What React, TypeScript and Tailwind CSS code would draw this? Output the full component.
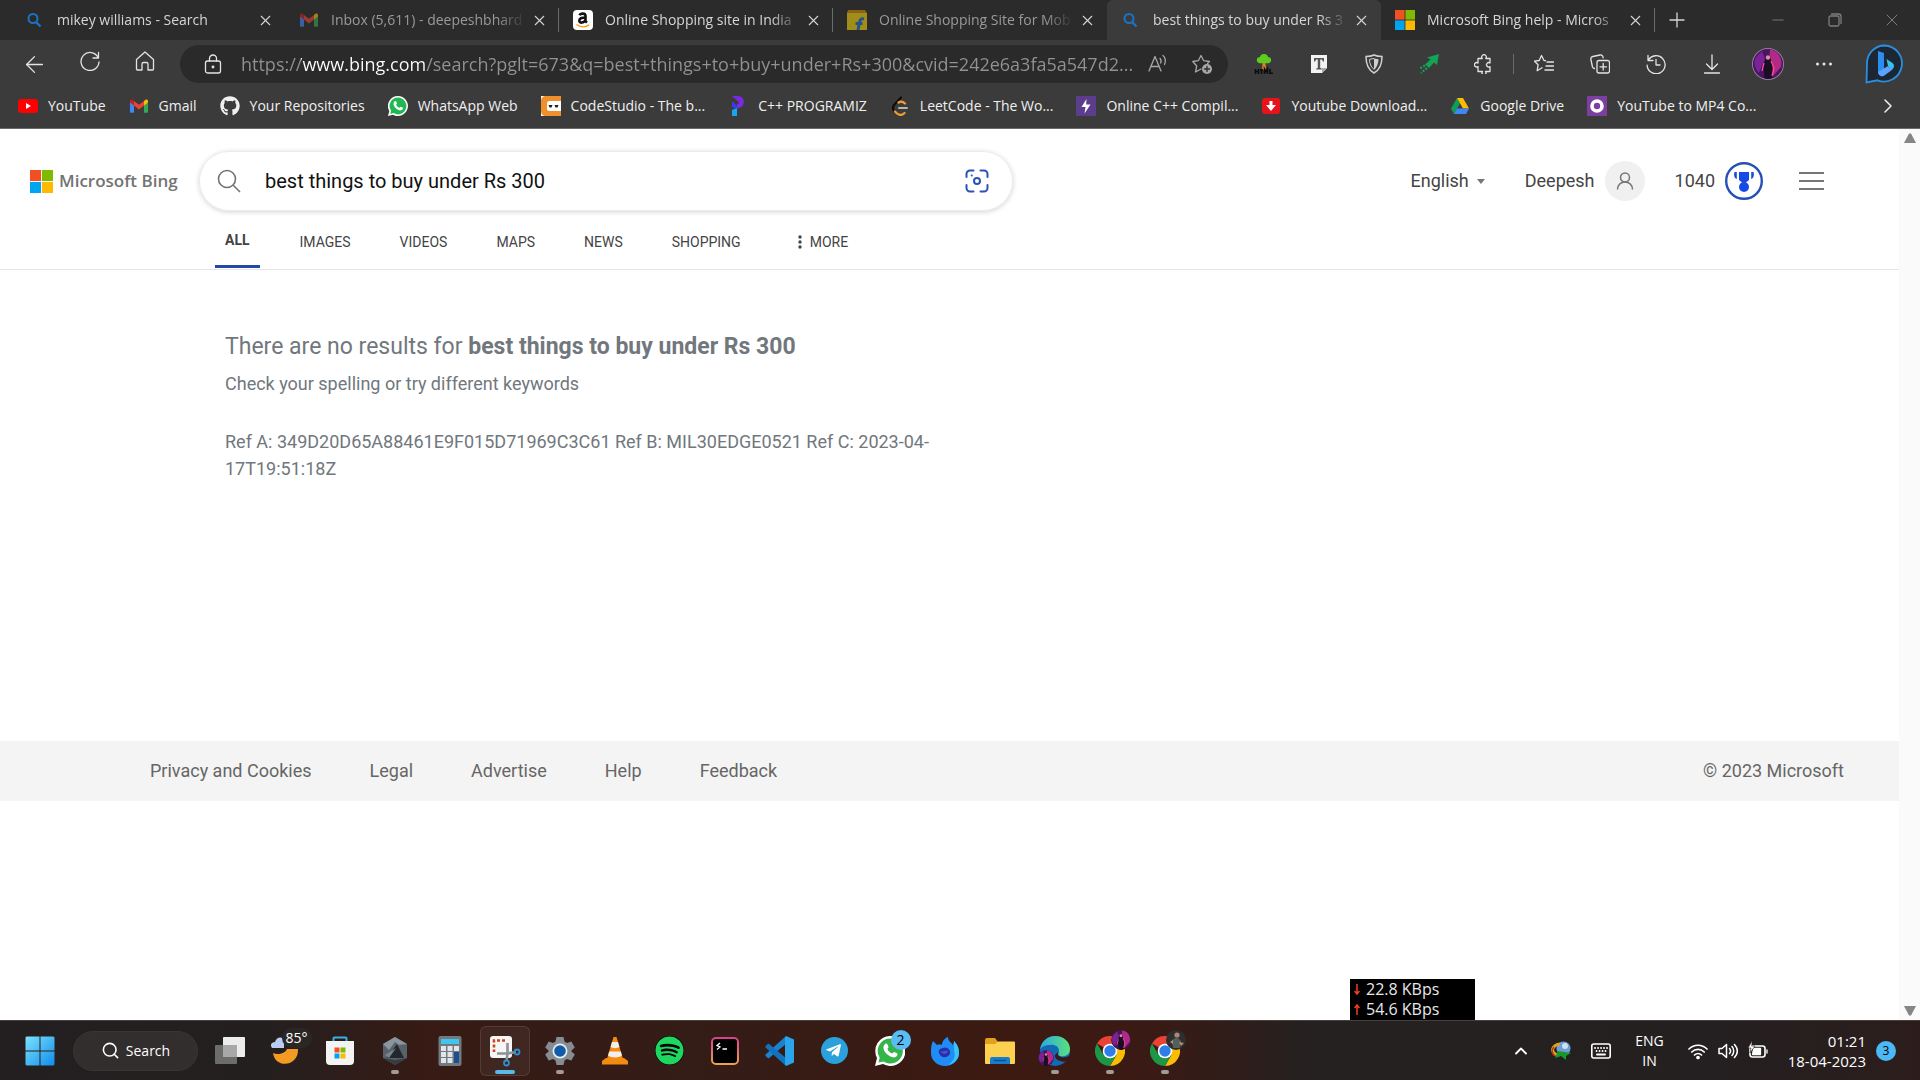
import React from 'react';
import type { ReactNode } from 'react';
import {
  ArrowLeft,
  ChevronRight,
  ChevronUp,
  Minus,
  Plus,
  Search,
  X,
} from 'lucide-react';
import { FaGithub, FaSpotify, FaTelegramPlane } from 'react-icons/fa';

type SvgProps = { className?: string; children: ReactNode; box?: string };

// Thin outline icon used in the browser toolbar
function Line({ className = 'size-5', children, box = '0 0 20 20' }: SvgProps) {
  return (
    <svg
      viewBox={box}
      className={className}
      fill="none"
      stroke="currentColor"
      strokeWidth="1.3"
      strokeLinecap="round"
      strokeLinejoin="round"
      aria-hidden="true"
    >
      {children}
    </svg>
  );
}

function Art({ className = 'size-5', children, box = '0 0 20 20' }: SvgProps) {
  return (
    <svg viewBox={box} className={className} aria-hidden="true">
      {children}
    </svg>
  );
}

function MicrosoftIcon({ className }: { className?: string }) {
  return (
    <Art className={className}>
      <path fill="#f25022" d="M0 0h9.6v9.6H0z" />
      <path fill="#7fba00" d="M10.4 0H20v9.6h-9.6z" />
      <path fill="#00a4ef" d="M0 10.4h9.6V20H0z" />
      <path fill="#ffb900" d="M10.4 10.4H20V20h-9.6z" />
    </Art>
  );
}

function GmailIcon({ className }: { className?: string }) {
  return (
    <Art className={className}>
      <path fill="#4285f4" d="M1 5v10.5c0 .8.5 1.3 1.3 1.3H5V8z" />
      <path fill="#34a853" d="M15 8v8.8h2.7c.8 0 1.3-.5 1.3-1.3V5z" />
      <path fill="#c5221f" d="M1 5.2V6.5L5 9.6V5L3.8 4C2.6 3 1 3.8 1 5.2z" />
      <path fill="#fbbc04" d="M19 5.2V6.5L15 9.6V5l1.2-1C17.4 3 19 3.8 19 5.2z" />
      <path fill="#ea4335" d="M5 4.9l5 3.8 5-3.8v4.7l-5 3.8-5-3.8z" />
    </Art>
  );
}

function BingSearchIcon() {
  return (
    <Art>
      <g fill="none" stroke="#1a73c4" strokeWidth="2">
        <circle cx="8" cy="8.5" r="4.5" />
        <path d="M11 12l4.5 4.5" strokeWidth="2.4" />
      </g>
    </Art>
  );
}

function FlipkartIcon() {
  return (
    <Art className="size-5 opacity-60">
      <path fill="#f0d010" d="M0 3h20v17H0z" />
      <path fill="#c98a00" d="M1 0h17l2 3H0z" />
      <path
        fill="none"
        stroke="#1e6fc8"
        strokeWidth="3"
        d="M17 9c-3-.7-4 .5-4.5 3.5L11 20M8.5 13.5h7"
      />
    </Art>
  );
}

function WhatsappDisc() {
  return (
    <Art>
      <path fill="#fff" d="M10 0a10 10 0 1 1-5 18.7L0 20l1.3-5A10 10 0 0 1 10 0z" />
      <path fill="#20b853" d="M10 1.6a8.4 8.4 0 1 1-4.5 15.5l-3.2.8.8-3.1A8.4 8.4 0 0 1 10 1.6z" />
      <path fill="#fff" d="M6.7 5.3c.7-.5 1.3-.3 1.6.4l.7 1.6c0 .7-.9 1-.7 1.6.7 1.3 1.700 2.300 3 2.800.5.100.9-1 1.500-1l1.800.9c.5.300.4 1 0 1.600-1 1.600-3 1.400-5 .2-2-1.100-3.600-3-4-5-.2-1.300.3-2.500 1.100-3.100z" />
    </Art>
  );
}

const tabs = [
  { title: 'mikey williams - Search', icon: <BingSearchIcon /> },
  { title: 'Inbox (5,611) - deepeshbhard', icon: <GmailIcon className="size-5 opacity-60" />, dim: true, divider: true },
  {
    title: 'Online Shopping site in India',
    divider: true,
    icon: (
      <span className="flex size-5 items-center justify-center rounded-sm bg-white">
        <Art>
          <path
            fill="none"
            stroke="#111"
            strokeWidth="2.6"
            d="M6.5 5.3c.8-2.3 6-2.4 6 .7v5.2l1.4 1.4M12.5 7.5C8.5 7.5 6.300 8.500 6.300 10.700c0 2.700 4.700 2.600 6.200-.9"
          />
          <path fill="none" stroke="#f90" strokeWidth="1.5" d="M3.5 14.5c4 3 9 3 12.5.3" />
        </Art>
      </span>
    ),
  },
  { title: 'Online Shopping Site for Mob', icon: <FlipkartIcon />, dim: true },
  { title: 'best things to buy under Rs 3', icon: <BingSearchIcon />, active: true },
  { title: 'Microsoft Bing help - Micros', icon: <MicrosoftIcon className="size-5" />, divider: true },
];

function TabStrip() {
  return (
    <div className="flex h-10 items-stretch bg-[#2b2b2b] pl-[11px] text-[#d6d6d6]">
      {tabs.map((tab) => (
        <div
          key={tab.title}
          className={
            'flex w-[274px] min-w-0 items-center pl-3.5 pr-2.5 ' +
            (tab.active ? 'rounded-t-md bg-[#3b3b3b]' : '')
          }
        >
          <button className="flex min-w-0 flex-1 items-center gap-3 text-left">
            <span className="shrink-0">{tab.icon}</span>
            <span
              className={
                'min-w-0 flex-1 overflow-hidden whitespace-nowrap text-sm leading-5 [mask-image:linear-gradient(90deg,#000_85%,transparent)] ' +
                (tab.dim ? 'text-[#9a9a9a]' : '')
              }
            >
              {tab.title}
            </span>
          </button>
          <button aria-label={'Close ' + tab.title} className="ml-1 flex w-[18px] justify-center">
            <X size={17} strokeWidth={1.5} />
          </button>
          <span className={'-mr-2.5 ml-2.5 h-6 w-px ' + (tab.divider ? 'bg-[#6a6a6a]' : '')} />
        </div>
      ))}
      <button aria-label="New tab" className="flex w-11 items-center justify-center">
        <Plus size={24} strokeWidth={1.3} />
      </button>
      <div className="ml-auto flex text-[#7d7d7d]">
        <button aria-label="Minimize" className="flex w-[57px] items-center justify-center">
          <Minus size={18} strokeWidth={1.2} />
        </button>
        <button aria-label="Restore" className="flex w-[57px] items-center justify-center">
          <Line className="size-4" box="0 0 16 16">
            <rect x="2" y="4" width="10" height="10" rx="1.5" />
            <path d="M4.5 2h7A2.5 2.5 0 0 1 14 4.5v7" />
          </Line>
        </button>
        <button aria-label="Close window" className="flex w-[57px] items-center justify-center">
          <X size={20} strokeWidth={1.2} />
        </button>
      </div>
    </div>
  );
}

function Avatar({ className = '' }: { className?: string }) {
  return (
    <Art className={'rounded-full ' + className} box="0 0 30 30">
      <circle cx="15" cy="15" r="15" fill="#4a1560" />
      <path fill="#b02a86" d="M17 0c8 2 13 9 11 18l-8 9-4-14z" />
      <path fill="#7a2397" d="M3 8l6-6 3 8-6 14C2 20 0 14 3 8z" />
      <path fill="#1a0d24" d="M12.500 9c1-4 5-4 5 0l2 8v13h-8l-1-13z" />
      <circle cx="15" cy="8.5" r="2.2" fill="#d98bb8" />
      <path stroke="#ff4f8c" strokeWidth="1.2" fill="none" d="M18 12l3 7-2 8M11 14l-2 8" />
    </Art>
  );
}

const extensions = [
  {
    label: 'HTML Tree',
    icon: (
      <Art>
        <path fill="#d8862a" d="M8.5 9h3l.5 7H8z" />
        <path fill="#5ecb1e" d="M10 0c3 0 4 2 4 3 3 0 4 3 2.5 5-1.5 2-4 1-6.5 1S5 10 3.5 8C2 6 3 3 6 3c0-1 1-3 4-3z" />
        <path stroke="#0d0d0d" strokeWidth="1.6" fill="none" d="M1.5 15v5M4.5 15v5M1.5 17.5h3M6 15.8h3M7.5 15v5M10.5 20v-5l1.5 2.5 1.5-2.5v5M16 15v4.2h3" />
      </Art>
    ),
  },
  {
    label: 'Text',
    icon: (
      <Art>
        <path fill="#f2f2f2" d="M2 1h16v13l-5 5H2z" />
        <path fill="#555" d="M5 4h10v3.5h-1.2L13 5.5h-1.8V14l1.5.6v.9H7.3v-.9l1.5-.6V5.5H7l-.8 2H5z" />
        <path fill="#aaa" d="M13 14h5l-5 5z" />
      </Art>
    ),
  },
  {
    label: 'Shield',
    icon: (
      <Art>
        <path fill="none" stroke="#d0d0d0" strokeWidth="1.5" d="M10 1c3 1.5 5.5 1.5 8 1.5C18 11 15.5 16 10 19 4.5 16 2 11 2 2.5 4.5 2.5 7 2.5 10 1z" />
        <path fill="#d0d0d0" d="M10 4.5l4.5.8c0 4-1.5 8-4.5 10.7z" />
        <path fill="none" stroke="#d0d0d0" d="M10 4.5l-4.5.8c0 4 1.5 8 4.5 10" />
      </Art>
    ),
  },
  {
    label: 'Send',
    icon: (
      <Art>
        <path fill="#14a457" d="M20 0l-2 11-3-2.5-5 5.5-4-3.5L11.5 5.500 8 3.500z" />
        <path stroke="#14a457" strokeWidth="2.2" strokeDasharray="2 1.5" fill="none" d="M6 11.5L0 15M8 14l-6 5" />
      </Art>
    ),
  },
  {
    label: 'Extensions',
    icon: (
      <Line>
        <path d="M4 4.5h4.2a2.3 2.3 0 1 1 3.6 0H16V9a2.2 2.2 0 1 0 0 3.6v4.9h-4.5a2 2 0 1 1-3 0H4v-5a2.2 2.2 0 1 1 0-3.5z" />
      </Line>
    ),
  },
];

const browserActions = [
  {
    label: 'Favorites',
    icon: (
      <Line>
        <path d="M11.5 6.7L10 6.5 7.5 1.5 5.2 6.5.5 7.2l3.6 3.5-.9 6 4.8-3M13 8h6.5M12 12h7.5M11 16h8.5" />
      </Line>
    ),
  },
  {
    label: 'Collections',
    icon: (
      <Line>
        <rect x="7" y="6.5" width="12.5" height="12.5" rx="2" />
        <path d="M13.2 9.5v6.5M10 12.8h6.5M4.5 14.5A3 3 0 0 1 2.5 13L.8 5A2.5 2.5 0 0 1 2.8 2.5L10 1a2.5 2.5 0 0 1 3 2l.1.8" />
      </Line>
    ),
  },
  {
    label: 'History',
    icon: (
      <Line>
        <path d="M2 1.5v5h5M2.3 6.2a9 9 0 1 1-1.2 5M10 5.5v5.5h4" />
      </Line>
    ),
  },
  {
    label: 'Downloads',
    icon: (
      <Line>
        <path d="M10 1v14M4.5 10l5.5 5.5L15.5 10M2.5 19h15" />
      </Line>
    ),
  },
  { label: 'Profile', icon: <Avatar className="size-[30px] ring-1 ring-[#9a7aa8]" /> },
  {
    label: 'Settings and more',
    icon: (
      <Art>
        <g fill="#e6e6e6">
          <circle cx="3.5" cy="10" r="1.5" />
          <circle cx="10" cy="10" r="1.5" />
          <circle cx="16.5" cy="10" r="1.5" />
        </g>
      </Art>
    ),
  },
];

function Toolbar() {
  return (
    <div className="flex h-12 items-center pl-[7px] pr-4 text-[#e4e4e4]">
      <div className="flex">
        <button aria-label="Back" className="flex w-[55px] justify-center">
          <ArrowLeft size={27} strokeWidth={1.2} />
        </button>
        <button aria-label="Refresh" className="flex w-[55px] justify-center">
          <Line>
            <path d="M18.5 1.5v5.5H13M18 6.3A9 9 0 1 0 19 11" />
          </Line>
        </button>
        <button aria-label="Home" className="flex w-[55px] justify-center">
          <Line>
            <path d="M1.5 8.5L10 1l8.5 7.5V18a1 1 0 0 1-1 1H13v-6a1.5 1.5 0 0 0-1.5-1.5h-3A1.5 1.5 0 0 0 7 13v6H2.5a1 1 0 0 1-1-1z" />
          </Line>
        </button>
      </div>
      <div className="ml-2 flex h-[38px] flex-1 items-center rounded-full bg-[#2a2a2a] pl-[23px] pr-4">
        <button aria-label="Site information">
          <Line>
            <rect x="2.5" y="7" width="15" height="12" rx="2" />
            <path d="M6.5 7V4.5a3.500 3.500 0 0 1 7 0V7" />
            <circle cx="10" cy="13" r=".8" fill="currentColor" />
          </Line>
        </button>
        <input
          aria-label="Address"
          type="text"
          readOnly
          value="https://www.bing.com/search?pglt=673&q=best+things+to+buy+under+Rs+300&cvid=242e6a3fa5a547d2..."
          className="ml-[18px] mr-2.5 min-w-0 flex-1 bg-[linear-gradient(90deg,#929292_60px,#ffffff_60px,#ffffff_185px,#929292_185px)] bg-clip-text text-lg leading-6 text-transparent outline-none"
        />
        <div className="flex gap-6 text-[#a8a8a8]">
          <button aria-label="Read aloud">
            <Line>
              <path d="M1 17L7 2.5 13 17M3 12.5h8M12 4.5c1 1 1.300 3 .7 4.500M15 1.500c2.500 2 3 6 1.500 9" />
            </Line>
          </button>
          <button aria-label="Add to favorites">
            <Line>
              <path d="M9 15l-5.500 3 1.200-6L.8 7.500l5.500-.8L9 1.500l2.700 5.200 5.800.8-2 2" />
              <circle cx="15" cy="15" r="5" fill="#a8a8a8" stroke="none" />
              <path stroke="#2a2a2a" d="M15 12.500v5M12.500 15h5" />
            </Line>
          </button>
        </div>
      </div>
      <div className="ml-2 flex items-center">
        {extensions.map((ext) => (
          <button key={ext.label} aria-label={ext.label} className="flex w-[55px] justify-center">
            {ext.icon}
          </button>
        ))}
        <span className="mx-0.5 h-5 w-px bg-[#6a6a6a]" />
        {browserActions.map((action) => (
          <button key={action.label} aria-label={action.label} className="flex w-14 justify-center">
            {action.icon}
          </button>
        ))}
        <button aria-label="Bing chat" className="ml-3">
          <Art className="size-10" box="0 0 40 40">
            <path fill="#1d2733" stroke="#2a8fe0" strokeWidth="1.8" d="M20.500 1.500a18 18 0 1 1-7 34.800L2.500 38.500 3 20A17.500 18 0 0 1 20.500 1.500z" />
            <path fill="#2d8cf0" d="M14 7l6 2v16l-6 4z" />
            <path fill="#35c1f1" d="M22.500 15l6 4c2 1.500 2 5-.5 6.500l-4-3.500z" />
            <path fill="#5aa4ff" d="M14 28l10-6 4.500 3.500-8.500 6.300c-3 1.500-6-.5-6-3.800z" />
          </Art>
        </button>
      </div>
    </div>
  );
}

const bookmarks = [
  {
    label: 'YouTube',
    icon: (
      <Art>
        <rect y="3" width="20" height="14" rx="3.5" fill="#f00" />
        <path fill="#fff" d="M8 7l5 3-5 3z" />
      </Art>
    ),
  },
  { label: 'Gmail', icon: <GmailIcon className="size-5" /> },
  { label: 'Your Repositories', icon: <FaGithub size={20} /> },
  { label: 'WhatsApp Web', icon: <WhatsappDisc /> },
  {
    label: 'CodeStudio - The b...',
    icon: (
      <Art>
        <path fill="#fff" d="M0 0h20v20H0z" />
        <path fill="#f0902a" d="M5 0h15v5H8.500A2.500 2.500 0 0 0 6 7.500v5A2.500 2.500 0 0 0 8.500 15H20v5H5c-3 0-5-2-5-5V5c0-3 2-5 5-5z" />
        <path fill="#222" d="M7.500 9h4l-1 2.500h-2zM13.500 9h4l-1 2.500h-2z" />
      </Art>
    ),
  },
  {
    label: 'C++ PROGRAMIZ',
    icon: (
      <Art>
        <path fill="#7a2be0" d="M4 0h5c5 0 8 3 6.500 8-.8 2.500-3 4-6.500 4.500V8c2 0 2.500-1.500 1-2.500z" />
        <path fill="#3a3af0" d="M4 5l6 6-1 2-5-2z" />
        <path fill="#14a5f5" d="M4 14l5-2v8H4z" />
      </Art>
    ),
  },
  {
    label: 'LeetCode - The Wo...',
    icon: (
      <Art>
        <path fill="none" stroke="#0c0c0c" strokeWidth="2.2" strokeLinecap="round" d="M11 1.500L4.500 8.500c-2 2-2 5 0 7" />
        <path fill="none" stroke="#f0a030" strokeWidth="2.2" strokeLinecap="round" d="M15 7.500c-2-2-4.500-2.500-6.500-1M5 15.500l2 2c2.500 2 5.500 1.500 7.500-.5" />
        <path stroke="#b5b5b5" strokeWidth="2" strokeLinecap="round" d="M9 12h8" />
      </Art>
    ),
  },
  {
    label: 'Online C++ Compil...',
    icon: (
      <Art>
        <path fill="#5c3d8c" d="M0 0h20v20H0z" />
        <path fill="#fff" d="M10.500 3L5.500 11h4l-1 6.500 6-9h-4.300z" />
      </Art>
    ),
  },
  {
    label: 'Youtube Download...',
    icon: (
      <Art>
        <rect x="1" y="2" width="18" height="16" rx="3" fill="#e8131a" />
        <path fill="#fff" d="M8.500 5h3v4H15l-5 6-5-6h3.500z" />
      </Art>
    ),
  },
  {
    label: 'Google Drive',
    icon: (
      <Art>
        <path fill="#0f9d58" d="M7 2L10 7.500 4 18 1 12.500z" />
        <path fill="#fbbc04" d="M7 2h6l6 10.500h-6z" />
        <path fill="#4285f4" d="M7 12.500h12L16 18H4z" />
      </Art>
    ),
  },
  {
    label: 'YouTube to MP4 Co...',
    icon: (
      <Art>
        <path fill="#7b3fa0" d="M0 0h20v20H0z" />
        <circle cx="10" cy="10" r="5" fill="none" stroke="#fff" strokeWidth="3.6" />
      </Art>
    ),
  },
];

function BookmarkBar() {
  return (
    <div className="flex h-10 items-center gap-[23px] pb-1 pl-[18px] pr-5 text-sm leading-5 text-[#f0f0f0]">
      {bookmarks.map((b) => (
        <a key={b.label} href="#" className="flex items-center gap-2.5 whitespace-nowrap">
          {b.icon}
          {b.label}
        </a>
      ))}
      <button aria-label="More favorites" className="ml-auto">
        <ChevronRight size={24} strokeWidth={1.5} />
      </button>
    </div>
  );
}

const scopes = ['IMAGES', 'VIDEOS', 'MAPS', 'NEWS', 'SHOPPING'];

function BingHeader() {
  return (
    <header className="border-b border-[#e5e5e5] pt-[22px]">
      <div className="flex items-center pl-[30px] pr-[75px]">
        <a href="#" className="flex w-[169px] items-center gap-1.5 whitespace-nowrap font-['Open_Sans',sans-serif] text-[17px] font-semibold text-[#737373]">
          <MicrosoftIcon className="size-[23px]" />
          Microsoft Bing
        </a>
        <form className="flex h-[60px] w-[814px] items-center rounded-full border border-[#ebebeb] px-[17px] shadow-[0_1px_5px_rgba(0,0,0,0.18)]">
          <svg viewBox="0 0 24 24" className="size-6" fill="none" stroke="#737373" strokeWidth="1.6" aria-hidden="true">
            <circle cx="10" cy="10" r="8.5" />
            <path d="M16 16l7 7" />
          </svg>
          <input
            aria-label="Search the web"
            type="text"
            defaultValue="best things to buy under Rs 300"
            className="ml-6 flex-1 text-xl text-[#111] outline-none"
          />
          <button type="button" aria-label="Search using an image" className="mr-1.5">
            <svg viewBox="0 0 24 24" className="size-6" fill="none" stroke="#2a52b8" strokeWidth="2" strokeLinecap="round" aria-hidden="true">
              <path d="M1.500 8V5a3.500 3.500 0 0 1 3.500-3.500h3.500M15.500 1.500H19A3.500 3.500 0 0 1 22.500 5v3M22.500 16v3a3.500 3.500 0 0 1-3.500 3.500h-3.500M8.500 22.500H5A3.500 3.500 0 0 1 1.500 19v-3" />
              <circle cx="12" cy="12" r="3" />
              <path d="M6.700 6.500h.1" />
            </svg>
          </button>
        </form>
        <div className="ml-auto flex items-center text-lg text-[#444]">
          <button className="flex items-center gap-2">
            English
            <svg viewBox="0 0 8 5" className="h-[5px] w-2" fill="#767676" aria-hidden="true">
              <path d="M0 0h8L4 5z" />
            </svg>
          </button>
          <button className="ml-10 flex items-center gap-2.5">
            Deepesh
            <span className="flex size-10 items-center justify-center rounded-full bg-[#f0f0f0]">
              <svg viewBox="0 0 18 18" className="size-[18px]" fill="none" stroke="#767676" strokeWidth="1.5" aria-hidden="true">
                <circle cx="9" cy="5.5" r="4.5" />
                <path d="M1.500 17.500c0-10 15-10 15 0" />
              </svg>
            </span>
          </button>
          <button className="ml-[30px] flex items-center gap-2.5">
            1040
            <svg viewBox="0 0 38 38" className="size-[38px]" aria-hidden="true">
              <circle cx="19" cy="19" r="17.8" fill="none" stroke="#2550b8" strokeWidth="2.4" />
              <g fill="#174ae4">
                <path d="M14 10h10v8l-3 2.500h-4L14 18z" />
                <circle cx="19" cy="25" r="5" />
                <path d="M11.800 10v7C8.500 16 9 12 9.500 10zM26.200 10v7c3.300-1 2.800-5 2.300-7z" />
              </g>
            </svg>
          </button>
          <button aria-label="Menu" className="ml-9">
            <svg viewBox="0 0 25 18" className="h-[18px] w-[25px]" stroke="#767676" strokeWidth="2" aria-hidden="true">
              <path d="M0 1h25M0 9h25M0 17h25" />
            </svg>
          </button>
        </div>
      </div>
      <nav className="flex h-[58px] items-center gap-[49px] pb-px pl-[215px] text-sm text-[#444]">
        <a href="#" className="-mr-[9px] flex h-full items-center border-b-3 border-[#2448a8] px-2.5 pt-1 font-bold">
          ALL
        </a>
        {scopes.map((s) => (
          <a key={s} href="#" className="pt-1">
            {s}
          </a>
        ))}
        <button className="ml-2 flex items-center gap-2 pt-1">
          <svg viewBox="0 0 4 14" className="h-3.5 w-1" fill="#444" aria-hidden="true">
            <circle cx="2" cy="2" r="1.7" />
            <circle cx="2" cy="7" r="1.7" />
            <circle cx="2" cy="12" r="1.7" />
          </svg>
          MORE
        </button>
      </nav>
    </header>
  );
}

function BingPage() {
  return (
    <div className="flex min-w-0 flex-1 flex-col bg-white font-['Roboto',sans-serif]">
      <BingHeader />
      <main className="h-[471px] max-w-[940px] pl-[225px] pt-[61px] text-lg leading-[27px] text-[#71777d]">
        <h1 className="text-[23px] leading-8">
          There are no results for <strong>best things to buy under Rs 300</strong>
        </h1>
        <p className="mt-[7px]">Check your spelling or try different keywords</p>
        <p className="mt-[31px]">
          Ref A: 349D20D65A88461E9F015D71969C3C61 Ref B: MIL30EDGE0521 Ref C: 2023-04-17T19:51:18Z
        </p>
      </main>
      <footer className="flex h-[60px] items-center gap-[58px] bg-[#f4f4f4] pl-[150px] pr-[55px] text-lg text-[#666]">
        <a href="#">Privacy and Cookies</a>
        <a href="#">Legal</a>
        <a href="#">Advertise</a>
        <a href="#">Help</a>
        <a href="#">Feedback</a>
        <span className="ml-auto">© 2023 Microsoft</span>
      </footer>
    </div>
  );
}

function ChromeIcon() {
  return (
    <Art className="size-[30px]" box="0 0 30 30">
      <path fill="#ea4335" d="M15 15L2 7.500a15 15 0 0 1 26 0H15z" />
      <path fill="#fbbc04" d="M15 7.500h13A15 15 0 0 1 15 30l6.500-11.300z" />
      <path fill="#1e9648" d="M2 7.500l6.500 11.300L15 22l6.500-3.300L15 30A15 15 0 0 1 2 7.500z" />
      <circle cx="15" cy="15" r="7.3" fill="#fff" />
      <circle cx="15" cy="15" r="5.7" fill="#2f7de9" />
    </Art>
  );
}

const apps: { name: string; icon: ReactNode; running?: boolean; active?: boolean }[] = [
  {
    name: 'Task View',
    icon: (
      <Art className="size-[30px]" box="0 0 30 30">
        <rect x="8" y="1" width="22" height="20" rx="1" fill="#ececec" />
        <rect x="0" y="9" width="22" height="19" rx="1" fill="#6c6c6c" />
        <path fill="#a8a8a8" d="M8 9h14v12H8z" />
      </Art>
    ),
  },
  {
    name: 'Weather',
    icon: (
      <span className="relative">
        <Art className="size-[30px]" box="0 0 30 30">
          <path fill="#f59a23" d="M3 17c4 2 12 1 14-4h11c1 18-23 20-25 4z" />
          <path fill="#b9cdf5" d="M2 12c-3-4 1-6 3-6 2-7 10-5 9 0v6z" />
        </Art>
        <span className="absolute -top-2 left-3 rounded-full bg-[#2b2727] px-1 text-sm leading-5 text-white">85°</span>
      </span>
    ),
  },
  {
    name: 'Microsoft Store',
    icon: (
      <Art className="size-[30px]" box="0 0 30 30">
        <path fill="none" stroke="#35b3e8" strokeWidth="2" d="M8.500 7V2.500a1 1 0 0 1 1-1h11a1 1 0 0 1 1 1V7" />
        <path fill="#f3f3f3" d="M1 5h28v20a4 4 0 0 1-4 4H5a4 4 0 0 1-4-4z" />
        <path fill="#f25022" d="M9.500 11.500h5v5h-5z" />
        <path fill="#7fba00" d="M15.500 11.500h5v5h-5z" />
        <path fill="#00a4ef" d="M9.500 17.500h5v5h-5z" />
        <path fill="#ffb900" d="M15.500 17.500h5v5h-5z" />
      </Art>
    ),
  },
  {
    name: 'Armoury Crate',
    running: true,
    icon: (
      <Art className="size-[30px]" box="0 0 30 30">
        <path fill="#59616a" d="M15 1l12 7v14l-12 7-12-7V8z" />
        <path fill="#8b959e" d="M15 1l12 7-8 1-4-3-6 8-6-6z" />
        <path fill="#23282d" d="M17 8l7 14H7z" />
        <path fill="#7a848d" d="M16 12l-7 10-4-3z" />
        <path fill="#363c42" d="M3 22l12 2 12-2-12 7z" />
      </Art>
    ),
  },
  {
    name: 'Calculator',
    icon: (
      <Art className="size-[30px]" box="0 0 30 30">
        <rect x="3.5" width="23" height="30" rx="2" fill="#74797e" />
        <path fill="#3ec6f0" d="M6 3h18v5H6z" />
        <path fill="#dfe5ea" d="M6 10h5v5H6zM12.500 10h5v5h-5zM19 10h5v5h-5zM6 16h5v5H6zM12.500 16h5v5h-5zM6 22h5v5H6zM12.500 22h5v5h-5z" />
        <path fill="#1b4f91" d="M19 16h5v11h-5z" />
      </Art>
    ),
  },
  {
    name: 'Snipping Tool',
    active: true,
    icon: (
      <Art className="size-8" box="0 0 32 32">
        <rect x="1" y="1" width="22" height="22" rx="3" fill="#f5f5f5" />
        <path fill="none" stroke="#d0431c" strokeWidth="2.6" strokeDasharray="3 2" d="M16 5.500H5v11.500" />
        <path fill="none" stroke="#8c9298" strokeWidth="2.6" d="M18.500 8v10.500H8M18.500 18.500L27 17M18.500 18.500L17.500 26" />
        <circle cx="28" cy="17" r="2.5" fill="none" stroke="#2b8fd0" strokeWidth="1.8" />
        <circle cx="17.5" cy="28" r="2.5" fill="none" stroke="#2b8fd0" strokeWidth="1.8" />
      </Art>
    ),
  },
  {
    name: 'Settings',
    running: true,
    icon: (
      <Art className="size-[30px]" box="0 0 30 30">
        <path
          fill="#858c93"
          d="M11.500 1h7l1 4.500 2.500 1.400 4.300-1.500 3.500 6-3.300 3.100v1l3.300 3.100-3.500 6-4.300-1.500-2.500 1.400-1 4.500h-7l-1-4.500L8 23.100l-4.300 1.500-3.500-6 3.300-3.100v-1L.2 11.400l3.500-6L8 6.900l2.500-1.400z"
        />
        <circle cx="15" cy="15" r="7.5" fill="#e8edf2" />
        <circle cx="15" cy="15" r="5.8" fill="#115ca8" />
      </Art>
    ),
  },
  {
    name: 'VLC',
    icon: (
      <Art className="size-[30px]" box="0 0 30 30">
        <path fill="#f58a10" d="M6 22h18l4 3v3.500H2V25z" />
        <path fill="#f58a10" d="M13.500 1h3L23 23c-2 3-14 3-16 0z" />
        <path fill="#f2eee9" d="M12 6h6l1.500 5c-2 1.500-7 1.500-9 0zM9.200 15.500h11.600L22 19.500c-3 2.500-11 2.500-14 0z" />
      </Art>
    ),
  },
  { name: 'Spotify', icon: <FaSpotify className="size-[29px] rounded-full bg-black text-[#1ed760]" /> },
  {
    name: 'Terminal',
    icon: (
      <Art className="size-[30px]" box="0 0 30 30">
        <defs>
          <linearGradient id="term" x2="0" y2="1">
            <stop stopColor="#d9418c" />
            <stop offset="1" stopColor="#f0a050" />
          </linearGradient>
        </defs>
        <rect x="2" y="2" width="26" height="26" rx="4" fill="#000" stroke="url(#term)" strokeWidth="2" />
        <path fill="none" stroke="#fff" strokeWidth="1.3" d="M10 7L7 9.500l3 1.500-3 2.500M12.500 13H17" />
      </Art>
    ),
  },
  {
    name: 'Visual Studio Code',
    icon: (
      <Art className="size-[30px]" box="0 0 30 30">
        <path fill="#1b82cf" d="M21 0l.5 7.500L3.500 22.500.5 20v-1.500z" />
        <path fill="#1272bd" d="M21 30l.5-7.500L3.500 7.500l-3 2.500v1.500z" />
        <path fill="#2ba4ee" d="M21 0l8 3.500v23L21 30l-1-2V2z" />
      </Art>
    ),
  },
  {
    name: 'Telegram',
    icon: (
      <span className="flex size-[27px] items-center justify-center rounded-full bg-[#2aa1dc] pr-0.5 text-white">
        <FaTelegramPlane size={17} />
      </span>
    ),
  },
  {
    name: 'WhatsApp',
    icon: (
      <span className="relative">
        <Art className="size-[30px]" box="0 0 30 30">
          <path fill="#fff" d="M15 0a15 15 0 1 1-7 28L0 30l2-8A15 15 0 0 1 15 0z" />
          <path fill="#35b44a" d="M15 2.500a12.500 12.500 0 1 1-6.500 23L3.500 26.500l1.200-4.800A12.500 12.500 0 0 1 15 2.500z" />
          <path fill="#fff" d="M10 8c1-.8 2-.5 2.500.5l1 2.500c0 1-1.300 1.500-1 2.300 1 2 2.500 3.500 4.500 4.300.8.200 1.300-1.600 2.300-1.600l2.700 1.300c.8.500.6 1.500 0 2.500-1.500 2.300-4.500 2-7.500.3-3-1.700-5.500-4.600-6-7.500-.3-2 .3-3.500 1.500-4.300z" />
        </Art>
        <span className="absolute -right-1.5 -top-1.5 flex size-5 items-center justify-center rounded-full bg-[#58bdf5] text-sm text-black">2</span>
      </span>
    ),
  },
  {
    name: 'Firefox Developer Edition',
    icon: (
      <Art className="size-[30px]" box="0 0 30 30">
        <path fill="#1f8df5" d="M3 5l4 4c2-1 3-1 5 0 0-4 3-7 6-8 0 4 3 5 5 8l1-4c4 4 5 8 5 12a14 13 0 0 1-28 0c0-5 0-8 2-12z" />
        <path fill="#37c5f7" d="M24 5c4 4 5 8 5 12 0 7-6 11-11 12 6-4 8-9 6-14z" />
        <path fill="#2a2fa8" d="M9 14c3-3 9-4 11 1 1 5-5 8-9 5-1-1-3-4-2-6z" />
        <path fill="#3f5be0" d="M10 15c3 2 5-1 8 0-1 3-5 4-8 0z" />
      </Art>
    ),
  },
  {
    name: 'File Explorer',
    icon: (
      <Art className="size-[30px]" box="0 0 30 30">
        <path fill="#e0a21a" d="M0 4a2 2 0 0 1 2-2h8l3 4v4H0z" />
        <path fill="#fdd04f" d="M0 8h10l3-2.500h16a1 1 0 0 1 1 1V27a1 1 0 0 1-1 1H1a1 1 0 0 1-1-1z" />
        <path fill="#1b7ccc" d="M5 28v-5a2 2 0 0 1 2-2h16a2 2 0 0 1 2 2v5z" />
        <path stroke="#0c4f8d" strokeWidth="1.3" d="M9 24.500h12" />
      </Art>
    ),
  },
  {
    name: 'Edge',
    running: true,
    icon: (
      <span className="relative">
        <Art className="size-[30px]" box="0 0 30 30">
          <defs>
            <linearGradient id="edge">
              <stop stopColor="#2aa9e0" />
              <stop offset="1" stopColor="#5be07a" />
            </linearGradient>
          </defs>
          <circle cx="15" cy="15" r="15" fill="#1269b5" />
          <path fill="#3a1a14" d="M18 16c-1 6 6 7 13 3v5l-4 1c-5 2-13-1-12-6z" />
          <path fill="url(#edge)" d="M0 14C1 5 8 0 15 0c9 0 15 6 15 13 0 6-5 8-10 7-3-1-1-2-1-5 0-5-5-7-9-6-5 0-9 2-10 5z" />
        </Art>
        <Avatar className="absolute -left-0.5 bottom-0 size-4" />
      </span>
    ),
  },
  {
    name: 'Chrome',
    running: true,
    icon: (
      <span className="relative">
        <ChromeIcon />
        <Avatar className="absolute -right-1.5 -top-1.5 size-5" />
      </span>
    ),
  },
  {
    name: 'Chrome, second profile',
    running: true,
    icon: (
      <span className="relative">
        <ChromeIcon />
        <Art className="absolute -right-1.5 -top-1.5 size-5">
          <circle cx="10" cy="10" r="10" fill="#2c2e30" />
          <circle cx="11" cy="5" r="2.6" fill="#b98468" />
          <path fill="#54605f" d="M6 10l5-3 4 4-1 7H7z" />
          <path fill="#c08a6c" d="M13 12l5 1-3 3zM4 12l3-2v4z" />
        </Art>
      </span>
    ),
  },
];

function Taskbar() {
  return (
    <div className="flex h-[60px] items-stretch border-t border-[#45403d] bg-[linear-gradient(90deg,#231f20_0%,#241f1f_14%,#371b14_22%,#341c17_36%,#3c1a12_52%,#3a1a14_60%,#252121_68%,#252120_78%,#241f20_90%,#2c1d1c_100%)] pl-3 text-white">
      <button aria-label="Start" className="flex w-[55px] items-center justify-center">
        <Art className="size-[30px]" box="0 0 30 30">
          <defs>
            <linearGradient id="win" gradientUnits="userSpaceOnUse" x1="0" y1="0" x2="30" y2="30">
              <stop stopColor="#7fe3ff" />
              <stop offset="1" stopColor="#0f8be8" />
            </linearGradient>
          </defs>
          <path fill="url(#win)" d="M1.500.5H14.500V14.500H.5V1.500zM15.500.5h13l1 1v13h-14zM.5 15.500h14v14h-13l-1-1zM15.500 15.500h14v13l-1 1h-13z" />
        </Art>
      </button>
      <button className="ml-1.5 mr-1 flex h-10 w-[125px] items-center justify-center gap-1.5 self-center rounded-full border border-[#3a3535] bg-[#322e2e] text-sm">
        <Search size={19} strokeWidth={2} />
        Search
      </button>
      {apps.map((app) => (
        <button key={app.name} aria-label={app.name} className="relative flex w-[55px] items-center justify-center">
          <span
            className={
              'flex size-[50px] items-center justify-center rounded-md ' +
              (app.active ? 'border border-white/10 bg-white/5' : '')
            }
          >
            {app.icon}
          </span>
          {app.running && <span className="absolute bottom-1.5 h-1 w-2 rounded-full bg-[#a39b98]" />}
          {app.active && <span className="absolute bottom-1.5 h-1 w-5 rounded-full bg-[#5ab8ea]" />}
        </button>
      ))}
      <div className="ml-auto flex items-center pr-6">
        <button aria-label="Show hidden icons" className="mr-5">
          <ChevronUp size={20} strokeWidth={2.2} />
        </button>
        <button aria-label="Download manager" className="mr-5">
          <Art>
            <circle cx="12.5" cy="7.5" r="7" fill="#6f9fd8" />
            <circle cx="14" cy="5" r="3" fill="#cfe2f5" />
            <path fill="none" stroke="#d9a520" strokeWidth="3" d="M9 3C2 4 0 9 3 12c3 3 7 2 9 0" />
            <path fill="none" stroke="#c03020" strokeWidth="1.5" d="M3 6c-3 3-2 7 1 9" />
            <path fill="#179a2c" d="M7 10l13 2-5 3v4l-5-4-6 2z" />
          </Art>
        </button>
        <button aria-label="Touch keyboard" className="mr-6">
          <Line>
            <rect x=".8" y="3" width="18.4" height="14" rx="2" strokeWidth="1.6" />
            <path strokeWidth="1.8" d="M4 7h.1M7 7h.1M10 7h.1M13 7h.1M16 7h.1M5.500 10h.1M8.500 10h.1M11.500 10h.1M14.500 10h.1M6 13.500h8" />
          </Line>
        </button>
        <button className="mr-6 text-center text-sm">
          ENG
          <br />
          IN
        </button>
        <button aria-label="Network, volume and battery" className="mr-5 flex gap-2.5">
          <Line>
            <path strokeWidth="1.7" d="M1 8c5-5 13-5 18 0M3.800 11c3.500-3.500 9-3.500 12.400 0M6.500 14c2-2 5-2 7 0" />
            <circle cx="10" cy="16.5" r="1.2" fill="currentColor" />
          </Line>
          <Line>
            <path strokeWidth="1.5" d="M1 7.500h3l4.500-4v13l-4.500-4H1zM11.500 7.500c1.300 1.500 1.300 3.500 0 5M14 5.500c2.300 2.500 2.300 6.500 0 9M16.500 3.500c3.500 4 3.500 9 0 13" />
          </Line>
          <Line>
            <rect x="2" y="5" width="15" height="11" rx="2.5" strokeWidth="1.6" />
            <path fill="currentColor" d="M6 7.500h6.500v6H4.500l.5-3zM19 9v3" />
            <path fill="currentColor" stroke="#241f20" strokeWidth=".6" d="M4 0L0 7h3l-1 5 5-7H4z" />
          </Line>
        </button>
        <button className="mr-2.5 text-right text-[15px] leading-5">
          01:21
          <br />
          18-04-2023
        </button>
        <button className="flex size-5 items-center justify-center rounded-full bg-[#4cb8f5] text-xs text-black">3</button>
      </div>
    </div>
  );
}

export default function App() {
  return (
    <div className="flex min-h-screen flex-col bg-white font-['Open_Sans','Noto_Sans',sans-serif]">
      <div className="border-b border-[#6b6b6b] bg-[#3b3b3b]">
        <TabStrip />
        <Toolbar />
        <BookmarkBar />
      </div>
      <div className="relative flex flex-1">
        <BingPage />
        <div className="flex w-[21px] flex-col items-center justify-between bg-[#fafafa] py-1">
          <svg viewBox="0 0 12 10" className="h-2.5 w-3" fill="#858585" aria-hidden="true">
            <path d="M5 .5h2L12 10H0z" />
          </svg>
          <svg viewBox="0 0 12 10" className="h-2.5 w-3" fill="#858585" aria-hidden="true">
            <path d="M0 0h12L7 9.500H5z" />
          </svg>
        </div>
        {/* network speed overlay */}
        <div className="absolute bottom-0 right-[445px] w-[125px] bg-black pb-px pl-1 text-base leading-5 text-[#e8e8e8]">
          <div className="flex items-center gap-1.5">
            <svg viewBox="0 0 6 11" className="h-[11px] w-1.5" stroke="#f0401c" strokeWidth="1.5" fill="none" aria-hidden="true">
              <path d="M3 0v10M.5 7L3 10l2.500-3" />
            </svg>
            22.8 KBps
          </div>
          <div className="flex items-center gap-1.5">
            <svg viewBox="0 0 6 11" className="h-[11px] w-1.5" stroke="#f0401c" strokeWidth="1.5" fill="none" aria-hidden="true">
              <path d="M3 11V1M.5 4L3 1l2.500 3" />
            </svg>
            54.6 KBps
          </div>
        </div>
      </div>
      <Taskbar />
    </div>
  );
}
